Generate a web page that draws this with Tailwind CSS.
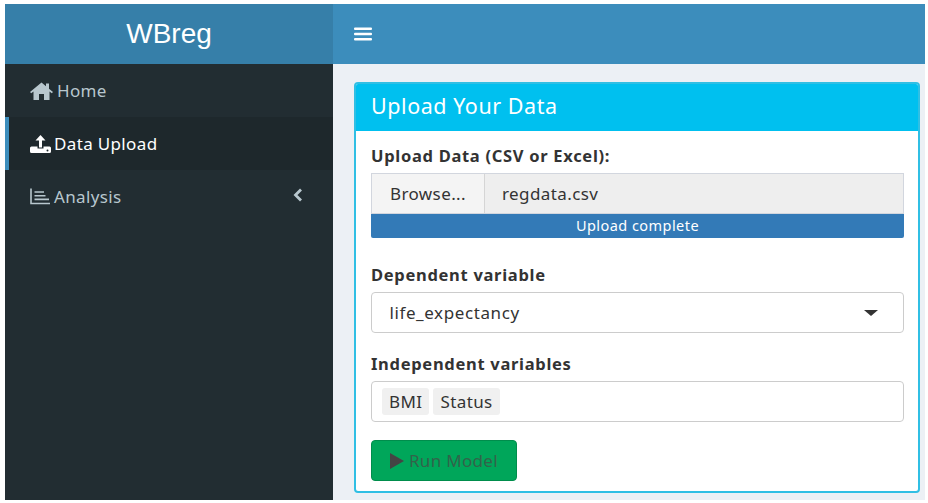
<!DOCTYPE html>
<html lang="en">
<head>
    <meta charset="UTF-8" />
    <title>WBreg</title>
    <script src="https://cdn.jsdelivr.net/npm/@tailwindcss/browser@4"></script>
</head>
<body class="bg-white w-[928px] h-[503px] overflow-hidden font-['Noto_Sans',sans-serif]">
    <div class="ml-[5px] mr-[3px] mt-[4px] h-[496px] flex flex-col">
        <header class="flex h-[60px] shrink-0">
            <div class="w-[328px] bg-[#367fa9] flex items-center justify-center text-white text-[28px] font-['Liberation_Sans',sans-serif]">WBreg</div>
            <div class="flex-1 bg-[#3c8dbc] flex items-center pl-[21px]">
                <svg class="w-[18px] h-[16px]" viewBox="0 0 18 16" fill="white">
                    <rect x="0" y="1.5" width="18" height="2.4" rx="1" />
                    <rect x="0" y="6.8" width="18" height="2.4" rx="1" />
                    <rect x="0" y="12.1" width="18" height="2.4" rx="1" />
                </svg>
            </div>
        </header>
        <div class="flex flex-1 min-h-0">
            <aside class="w-[328px] bg-[#222d32] text-[17px] tracking-[0.35px]">
                <a class="flex items-center h-[53px] pl-[25px] text-[#b8c7ce] gap-[4px]">
                    <svg class="w-[23px] h-[18px]" viewBox="0 0 23 18" fill="#b8c7ce">
                        <path d="M11.5 0.5 L16 4.2 L16 1.5 L19 1.5 L19 6.7 L23 10 L21.8 11.2 L19.5 9.4 L19.5 18 L14 18 L14 12 L9 12 L9 18 L3.5 18 L3.5 9.4 L1.2 11.2 L0 10 Z" />
                    </svg>
                    <span>Home</span>
                </a>
                <a class="flex items-center h-[53px] pl-[21px] text-white gap-[3px] bg-[#1e282c] border-l-4 border-[#3c8dbc]">
                    <svg class="w-[21px] h-[18px]" viewBox="0 0 21 18" fill="white">
                        <path d="M10.5 0 L15.5 5.5 L12 5.5 L12 12.5 L9 12.5 L9 5.5 L5.5 5.5 Z" />
                        <path d="M1.5 11.5 L7.5 11.5 L7.5 13.5 L13.5 13.5 L13.5 11.5 L19.5 11.5 Q21 11.5 21 13 L21 16.5 Q21 18 19.5 18 L1.5 18 Q0 18 0 16.5 L0 13 Q0 11.5 1.5 11.5 Z" />
                        <circle cx="17.5" cy="15.4" r="1" fill="#1e282c" />
                    </svg>
                    <span>Data Upload</span>
                </a>
                <a class="flex items-center h-[53px] pl-[25px] pr-[30px] text-[#b8c7ce] gap-[4px]">
                    <svg class="w-[20px] h-[17px]" viewBox="0 0 20 17" fill="none" stroke="#b8c7ce" stroke-width="1.6">
                        <path d="M1 0.5 L1 15.5 L20 15.5" />
                        <path d="M4.5 4 L14 4 M4.5 7.7 L15.5 7.7 M4.5 11.4 L19 11.4" />
                    </svg>
                    <span>Analysis</span>
                    <svg class="w-[10px] h-[14px] ml-auto mb-[3px]" viewBox="0 0 10 14" fill="none" stroke="#b8c7ce" stroke-width="2.8">
                        <path d="M8 1.5 L2.5 7 L8 12.5" />
                    </svg>
                </a>
            </aside>
            <main class="flex-1 bg-[#ecf0f5] pt-[18px] pl-[21px] pr-[5px]">
                <section class="h-[411px] bg-white border-2 border-[#30bfe4] rounded-[4px] overflow-hidden">
                    <h3 class="h-[47px] bg-[#00c0ef] text-white text-[21.5px] tracking-[0.55px] flex items-center pl-[15px] pb-[2px]">Upload Your Data</h3>
                    <div class="pl-[15px] pr-[14px] pt-[14px] text-[#333]">
                        <label class="block font-bold text-[16.5px] tracking-[0.7px] leading-[21px]">Upload Data (CSV or Excel):</label>
                        <div class="mt-[7px] flex h-[41px] border border-[#d2d6de] text-[17px] tracking-[0.4px]">
                            <div class="w-[113px] bg-[#f4f4f4] border-r border-[#d5d5d5] flex items-center justify-center">Browse...</div>
                            <div class="flex-1 bg-[#eeeeee] flex items-center pl-[17px]">regdata.csv</div>
                        </div>
                        <div class="h-[24px] bg-[#337ab7] text-white text-[14.5px] tracking-[0.45px] flex items-center justify-center rounded-b-[2px]">Upload complete</div>
                        <label class="block font-bold text-[16.5px] tracking-[0.7px] leading-[20px] mt-[27px]">Dependent variable</label>
                        <div class="mt-[7px] h-[41px] border border-[#cccccc] rounded-[4px] flex items-center justify-between pl-[17.5px] pr-[25px] text-[17px] tracking-[0.6px]">
                            <span>life_expectancy</span>
                            <span class="w-0 h-0 border-x-[7px] border-x-transparent border-t-[6px] border-t-[#333]"></span>
                        </div>
                        <label class="block font-bold text-[16.5px] tracking-[0.7px] leading-[20px] mt-[21px]">Independent variables</label>
                        <div class="mt-[7px] h-[41px] border border-[#cccccc] rounded-[4px] flex items-center gap-[4px] pl-[10px] text-[17px] tracking-[0.4px]">
                            <span class="h-[27px] px-[7px] bg-[#f0f0f0] rounded-[3px] flex items-center">BMI</span>
                            <span class="h-[27px] px-[7px] bg-[#f0f0f0] rounded-[3px] flex items-center">Status</span>
                        </div>
                        <button class="mt-[18px] w-[146px] h-[41px] bg-[#00a65a] border border-[#008d4c] rounded-[4px] flex items-center pl-[18px] gap-[5px] text-[17px] tracking-[0.3px] text-[#33634a]">
                            <svg class="w-[14px] h-[16px]" viewBox="0 0 14 16" fill="#444"><path d="M0 0 L14 8 L0 16 Z" /></svg>
                            <span>Run Model</span>
                        </button>
                    </div>
                </section>
            </main>
        </div>
    </div>
</body>
</html>
